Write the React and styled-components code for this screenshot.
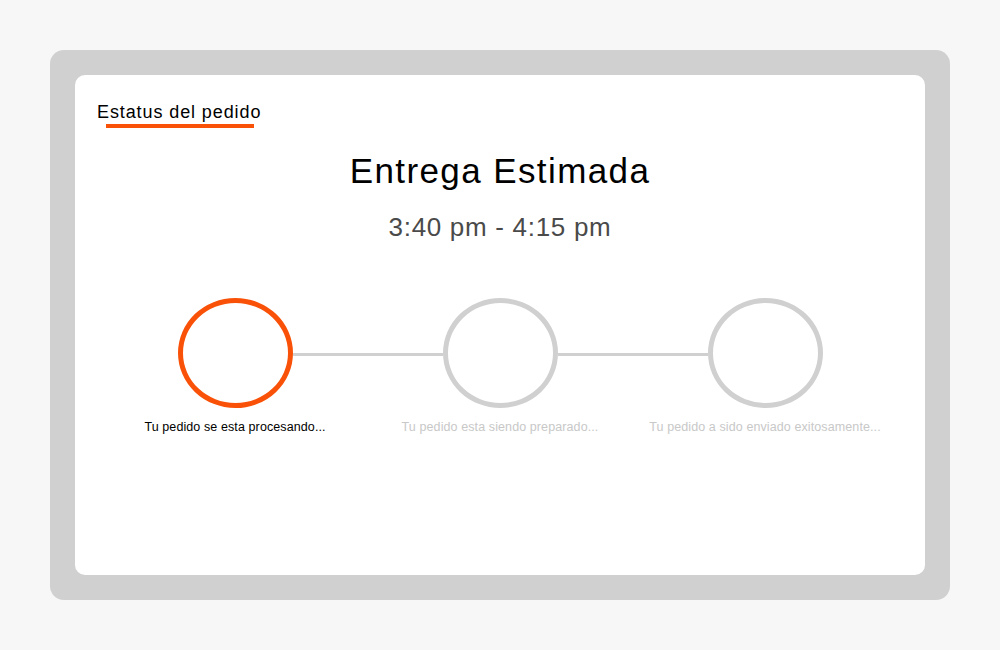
import React from 'react';
import styled, { createGlobalStyle } from 'styled-components';

const GlobalStyle = createGlobalStyle`
	body {
		margin: 0;
		background: #f7f7f7;
		font-family: "Liberation Sans", Arial, sans-serif;
	}
`;

const Page = styled.div`
	height: 650px;
	padding: 50px;
	box-sizing: border-box;
`;

const Frame = styled.div`
	height: 550px;
	background: #d0d0d0;
	border-radius: 14px;
	padding: 25px;
	box-sizing: border-box;
`;

const Card = styled.div`
	height: 100%;
	background: #fff;
	border-radius: 10px;
	padding: 27px 22px;
	box-sizing: border-box;
	display: flex;
	flex-direction: column;
`;

const TabTitle = styled.div`
	align-self: flex-start;
	display: flex;
	flex-direction: column;
`;

const TabLabel = styled.span`
	font-size: 18px;
	line-height: 20px;
	letter-spacing: 0.9px;
	color: #000;
`;

const TabLine = styled.span`
	height: 4px;
	width: 148px;
	margin: 2px 0 0 9px;
	background: #f95208;
`;

const Heading = styled.h1`
	margin: 23px 0 0;
	font-size: 35px;
	font-weight: 400;
	line-height: 40px;
	letter-spacing: 1.4px;
	text-align: center;
	color: #000;
`;

const Time = styled.div`
	margin-top: 21px;
	font-size: 26px;
	line-height: 30px;
	letter-spacing: 0.7px;
	text-align: center;
	color: #4a4a4a;
`;

const Steps = styled.div`
	margin-top: 56px;
	display: flex;
	justify-content: center;
	align-items: flex-start;
`;

const Step = styled.div`
	width: 115px;
	display: flex;
	flex-direction: column;
	align-items: center;
`;

const Circle = styled.div`
	width: 115px;
	height: 110px;
	border-radius: 50%;
	border: 5px solid ${p => (p.$active ? '#f95208' : '#d0d0d0')};
	box-sizing: border-box;
`;

const Label = styled.div`
	margin-top: 12px;
	white-space: nowrap;
	font-size: 12.5px;
	line-height: 14px;
	letter-spacing: 0.1px;
	color: ${p => (p.$active ? '#000' : '#c8c8c8')};
`;

const Connector = styled.div`
	width: 150px;
	height: 3px;
	margin-top: 55px;
	background: #d0d0d0;
`;

const steps = [
	{ label: 'Tu pedido se esta procesando...', active: true },
	{ label: 'Tu pedido esta siendo preparado...', active: false },
	{ label: 'Tu pedido a sido enviado exitosamente...', active: false },
];

const App = () => {
	return (
		<>
			<GlobalStyle />
			<Page>
				<Frame>
					<Card>
						<TabTitle>
							<TabLabel>Estatus del pedido</TabLabel>
							<TabLine />
						</TabTitle>
						<Heading>Entrega Estimada</Heading>
						<Time>3:40 pm - 4:15 pm</Time>
						<Steps>
							{steps.map((s, i) => (
								<React.Fragment key={s.label}>
									{i > 0 && <Connector />}
									<Step>
										<Circle $active={s.active} />
										<Label $active={s.active}>{s.label}</Label>
									</Step>
								</React.Fragment>
							))}
						</Steps>
					</Card>
				</Frame>
			</Page>
		</>
	);
};

export default App;
